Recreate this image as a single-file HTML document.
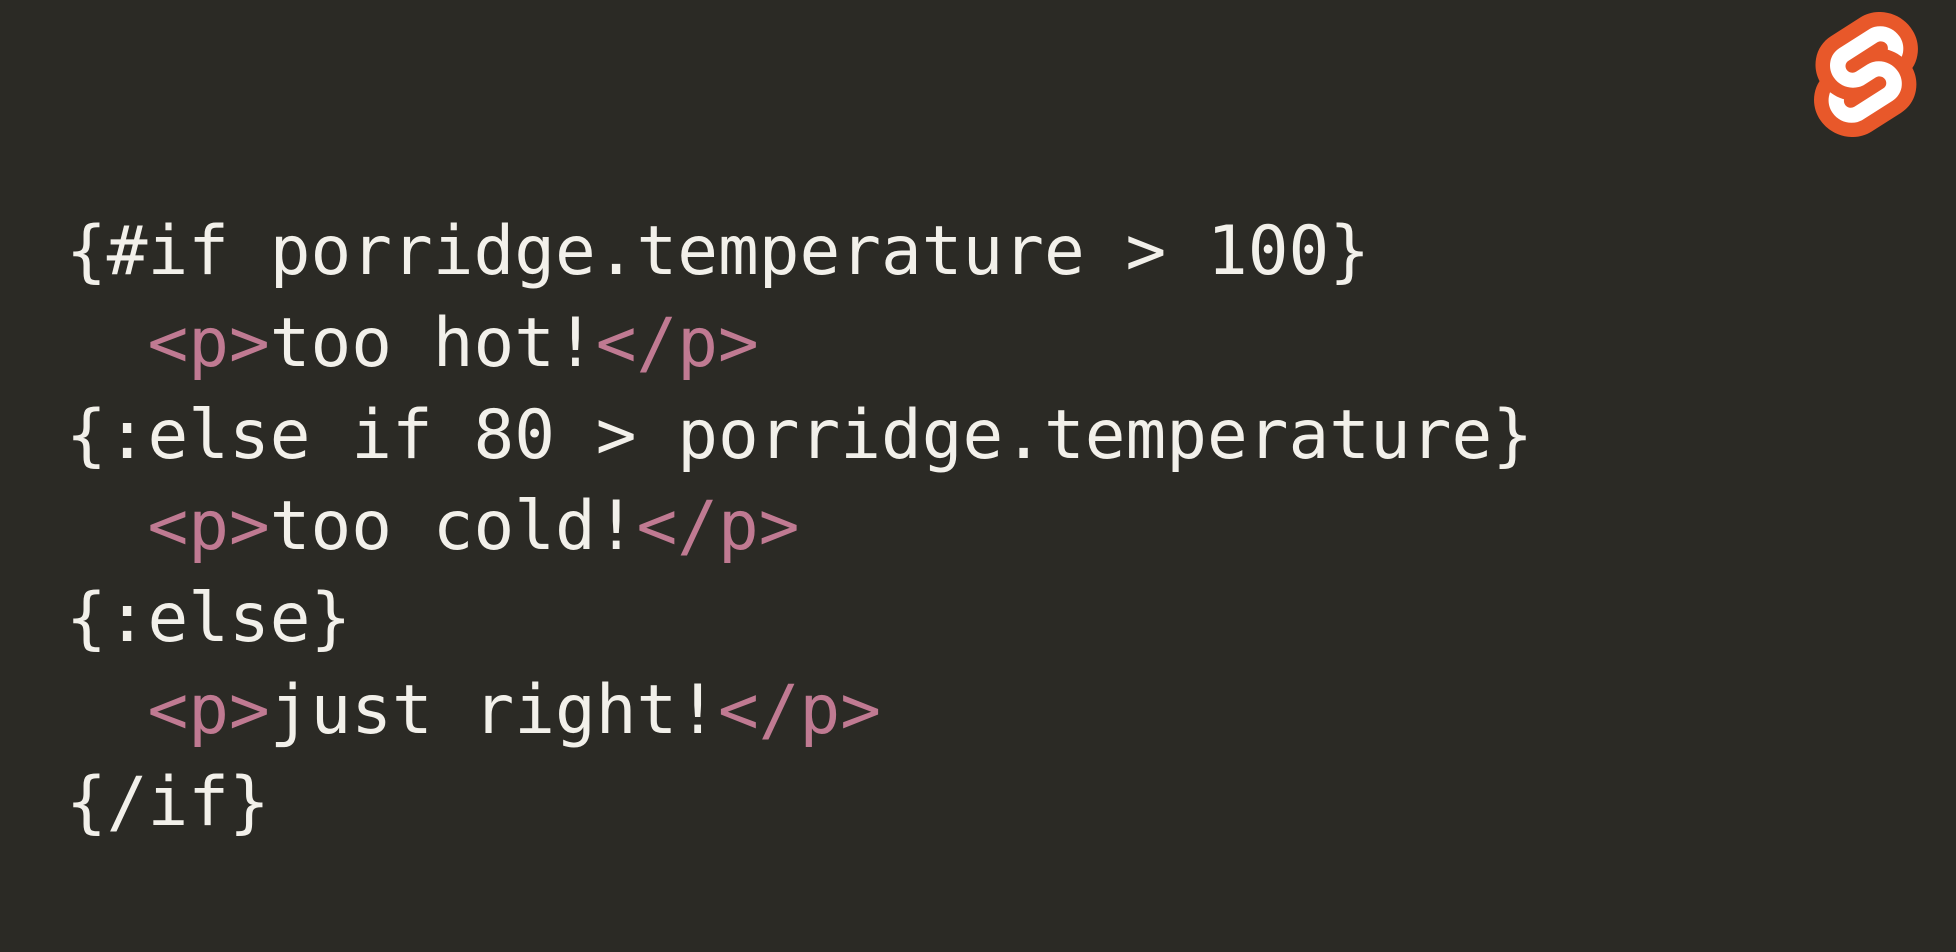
<!DOCTYPE html>
<html><head><meta charset="utf-8"><style>
html,body{margin:0;padding:0;}
body{width:1956px;height:952px;background:#2b2a25;position:relative;overflow:hidden;}
pre{position:absolute;left:66px;top:205px;margin:0;font-family:"DejaVu Sans Mono","Liberation Mono",monospace;font-size:67.7px;line-height:91.8px;color:#f2f0ea;}
.t{color:#c07a92;}
svg{position:absolute;left:1814px;top:12px;}
</style></head><body>
<svg width="104" height="125" viewBox="0 0 98.1 118">
<path fill="#e8582a" d="M91.8 15.6C80.9-.1 59.2-4.7 43.6 5.2L16.1 22.8C8.6 27.5 3.4 35.2 1.9 43.9c-1.3 7.3-.2 14.8 3.3 21.3-2.4 3.6-4 7.6-4.7 11.8-1.6 8.9.5 18.1 5.7 25.4 11 15.7 32.6 20.3 48.2 10.4l27.5-17.5c7.5-4.7 12.7-12.4 14.2-21.1 1.3-7.3.2-14.8-3.3-21.3 2.4-3.6 4-7.6 4.7-11.8 1.7-9-.4-18.2-5.7-25.4"/>
<path fill="#fff" d="M40.9 103.9c-8.9 2.3-18.2-1.2-23.4-8.7-3.2-4.4-4.4-9.9-3.5-15.3.2-.9.4-1.7.6-2.6l.5-1.6 1.4 1c3.3 2.4 6.9 4.2 10.8 5.4l1 .3-.1 1c-.1 1.4.3 2.9 1.1 4.1 1.6 2.3 4.4 3.4 7.1 2.7.6-.2 1.2-.4 1.7-.7L65.5 72c1.4-.9 2.3-2.2 2.6-3.8.3-1.6-.1-3.3-1-4.6-1.6-2.3-4.4-3.3-7.1-2.6-.6.2-1.2.4-1.7.7l-10.5 6.7c-1.7 1.1-3.6 1.9-5.6 2.4-8.9 2.3-18.2-1.2-23.4-8.7-3.1-4.4-4.4-9.9-3.4-15.3.9-5.2 4.1-9.9 8.6-12.7l27.5-17.5c1.7-1.1 3.6-1.9 5.6-2.5 8.9-2.3 18.2 1.2 23.4 8.7 3.2 4.4 4.4 9.9 3.5 15.3-.2.9-.4 1.7-.7 2.6l-.5 1.6-1.4-1c-3.3-2.4-6.9-4.2-10.8-5.4l-1-.3.1-1c.1-1.4-.3-2.9-1.1-4.1-1.6-2.3-4.4-3.3-7.1-2.6-.6.2-1.2.4-1.7.7L32.4 46.1c-1.4.9-2.3 2.2-2.6 3.8s.1 3.3 1 4.6c1.6 2.3 4.4 3.3 7.1 2.6.6-.2 1.2-.4 1.7-.7l10.5-6.7c1.7-1.1 3.6-1.9 5.6-2.5 8.9-2.3 18.2 1.2 23.4 8.7 3.2 4.4 4.4 9.9 3.5 15.3-.9 5.2-4.1 9.9-8.6 12.7l-27.5 17.5c-1.7 1.1-3.6 1.9-5.6 2.5"/>
</svg>
<pre>{#if porridge.temperature &gt; 100}
  <span class="t">&lt;p&gt;</span>too hot!<span class="t">&lt;/p&gt;</span>
{:else if 80 &gt; porridge.temperature}
  <span class="t">&lt;p&gt;</span>too cold!<span class="t">&lt;/p&gt;</span>
{:else}
  <span class="t">&lt;p&gt;</span>just right!<span class="t">&lt;/p&gt;</span>
{/if}</pre>
</body></html>
